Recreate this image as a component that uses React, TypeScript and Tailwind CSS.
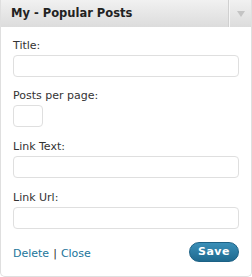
import React from "react";

const Field = ({ label, small, top }: { label: string; small?: boolean; top: string }) => (
    <div className={top}>
        <div className="h-[14px] leading-[14px] text-[11px] text-[#333]">{label}</div>
        <input
            className={`mt-[2px] block h-[22px] rounded-[4px] border border-[#dfdfdf] bg-white outline-none ${small ? "w-[30px]" : "w-full"}`}
        />
    </div>
);

export default function App() {
    return (
        <div className="w-[252px] h-[277px] bg-white" style={{ fontFamily: '"DejaVu Sans", Verdana, sans-serif' }}>
            <div className="flex h-full flex-col rounded-b-[5px] border border-t-0 border-[#dfdfdf]">
                <div className="flex h-[27px] bg-gradient-to-b from-[#f1f1f1] to-[#dcdcdc]">
                    <div className="flex flex-1 items-center pl-[10px] text-[11.5px] font-bold text-[#222]">
                        My - Popular Posts
                    </div>
                    <div className="w-px bg-[#d0d0d0]" />
                    <div className="w-px bg-[#f6f6f6]" />
                    <div className="flex w-[21px] items-center justify-center">
                        <svg width="8" height="6" viewBox="0 0 8 6">
                            <path d="M0 0 L8 0 L4 6 Z" fill="#c4c4c4" />
                        </svg>
                    </div>
                </div>
                <div className="flex-1 px-[12px] pt-[12px]">
                    <Field label="Title:" top="" />
                    <Field label="Posts per page:" small top="mt-[12px]" />
                    <Field label="Link Text:" top="mt-[13px]" />
                    <Field label="Link Url:" top="mt-[13px]" />
                    <div className="mt-[13px] flex items-center justify-between">
                        <div className="pt-[4px] text-[11px] text-[#21759b]">
                            <span>Delete</span>
                            <span className="mx-[4px] text-[#333]">|</span>
                            <span>Close</span>
                        </div>
                        <button className="h-[20px] w-[50px] rounded-[10px] border border-[#1c6185] bg-gradient-to-b from-[#3a8fb8] to-[#1f6a8f] text-[11px] font-bold tracking-[0.5px] text-white">
                            Save
                        </button>
                    </div>
                </div>
            </div>
        </div>
    );
}
